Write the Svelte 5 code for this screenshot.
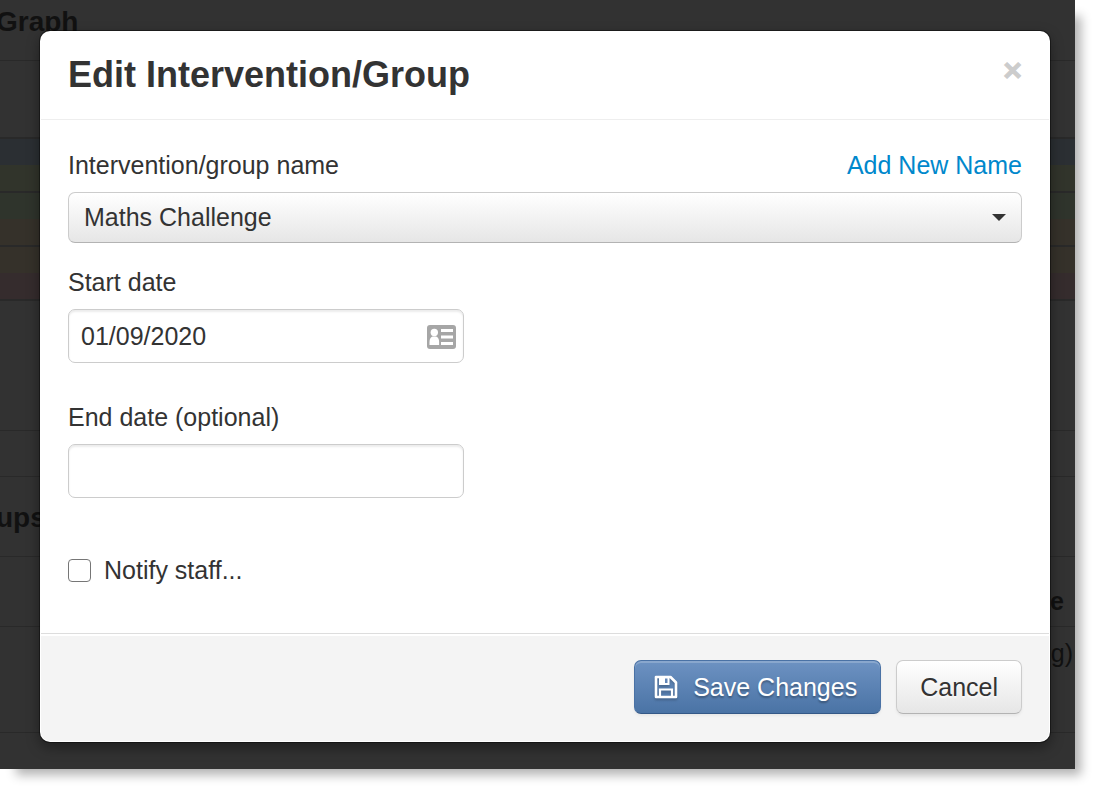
<script lang="ts">
  let groupName = $state('Maths Challenge');
  let startDate = $state('01/09/2020');
  let endDate = $state('');
  let notifyStaff = $state(false);
</script>

<div class="page">
  <div class="scene">
    <!-- dimmed page behind the dialog -->
    <div class="behind" aria-hidden="true">
      <div class="row heading graph">Graph</div>
      <div class="row toolbar"></div>
      <div class="bands">
        <div class="band blue"></div>
        <div class="band olive"></div>
      </div>
      <div class="bands">
        <div class="band green"></div>
        <div class="band brown"></div>
      </div>
      <div class="bands">
        <div class="band brown"></div>
        <div class="band red"></div>
      </div>
      <div class="row chart"></div>
      <div class="row strip"></div>
      <div class="row heading groups">ups</div>
      <div class="row column-head">e</div>
      <div class="row cell">g)</div>
    </div>

    <div class="modal" role="dialog" aria-labelledby="modal-title">
      <header class="modal-header">
        <h3 id="modal-title">Edit Intervention/Group</h3>
        <button class="close" type="button" aria-label="Close">×</button>
      </header>

      <form id="edit-group" class="modal-body">
        <div class="field">
          <div class="label-row">
            <label for="group-name">Intervention/group name</label>
            <a href="#new-name">Add New Name</a>
          </div>
          <div class="select-wrap">
            <select id="group-name" bind:value={groupName}>
              <option>Maths Challenge</option>
            </select>
            <svg class="caret" viewBox="0 0 14 7"><path d="M0 0h14L7 7z" fill="#333" /></svg>
          </div>
        </div>

        <div class="field start">
          <label for="start-date">Start date</label>
          <div class="input-wrap">
            <input id="start-date" type="text" bind:value={startDate} />
            <svg class="card-icon" viewBox="0 0 29 24">
              <rect width="29" height="24" rx="3" fill="#a6a6a6" />
              <circle cx="7.300" cy="7.500" r="3.700" fill="#fff" />
              <path d="M2.500 20v-3q0-4.500 3-5.500h3.600q3 1 3 5.500v3z" fill="#fff" />
              <path d="M14 4h12v3H14zM14 10.500h12v3H14zM14 17h12v3H14z" fill="#fff" />
            </svg>
          </div>
        </div>

        <div class="field end">
          <label for="end-date">End date (optional)</label>
          <div class="input-wrap">
            <input id="end-date" type="text" bind:value={endDate} />
          </div>
        </div>

        <label class="notify">
          <input type="checkbox" bind:checked={notifyStaff} />
          Notify staff...
        </label>
      </form>

      <footer class="modal-footer">
        <button class="btn primary" type="submit" form="edit-group">
          <svg class="save-icon" viewBox="0 0 24 24" fill="none" stroke="#fff" stroke-width="2">
            <path d="M2 2h14.500l5.500 5.500V22H2z" stroke-width="2.600" stroke-linejoin="round" />
            <path d="M5 2h10.500v8H5z" fill="#fff" stroke="none" />
            <path d="M11 3.500h2.500v4.500H11z" fill="#6286b8" stroke="none" />
            <path d="M6 21.500V14.500h12v7" stroke-width="2.200" />
          </svg>
          Save Changes
        </button>
        <button class="btn" type="button">Cancel</button>
      </footer>
    </div>
  </div>
</div>

<style>
  :global(body) {
    margin: 0;
    background: #fff;
  }

  .page {
    padding: 0 25px 25px 0;
    overflow: hidden;
    font-family: "Liberation Sans", Arial, sans-serif;
    font-size: 25px;
    line-height: 36px;
    color: #333;
  }

  .scene {
    display: grid;
    background: #323232;
    box-shadow: 11px 11px 10px -5px rgba(0, 0, 0, 0.3);
  }

  /* --- dimmed page --- */
  .behind {
    grid-area: 1 / 1;
    min-width: 0;
    overflow: hidden;
    color: #111;
  }
  .row {
    box-sizing: border-box;
    border-bottom: 1px solid #292929;
  }
  .heading {
    font-size: 28px;
    font-weight: bold;
    text-indent: -4px;
  }
  .graph {
    height: 61px;
    padding-top: 4px;
  }
  .toolbar {
    height: 78px;
    border-bottom-width: 2px;
  }
  .bands {
    border-bottom: 2px solid #292929;
  }
  .band {
    height: 26px;
  }
  .blue { background: #2b2f33; }
  .olive { background: #31342b; }
  .green { background: #2f342c; }
  .brown { background: #35312a; }
  .red { background: #352c2d; }
  .chart { height: 130px; }
  .strip { height: 46px; }
  .groups {
    height: 80px;
    padding-top: 23px;
  }
  .column-head {
    height: 70px;
    padding: 26px 11px 0 0;
    font-weight: bold;
    text-align: right;
  }
  .cell {
    height: 106px;
    padding: 8px 2px 0 0;
    text-align: right;
  }

  /* --- dialog --- */
  .modal {
    grid-area: 1 / 1;
    z-index: 1;
    margin: 31px 25px 27px 40px;
    padding: 1px;
    background: #fff;
    border-radius: 10px;
    box-shadow: 0 0 0 1px rgba(0, 0, 0, 0.4), 0 5px 14px rgba(0, 0, 0, 0.4);
  }
  .modal-header {
    display: flex;
    justify-content: space-between;
    align-items: flex-start;
    padding: 23px 27px 24px;
    border-bottom: 1px solid #eee;
  }
  h3 {
    margin: 0;
    font-size: 36px;
    line-height: 40px;
  }
  .close {
    padding: 0;
    border: 0;
    background: none;
    color: #ccc;
    font: bold 32px/30px "Liberation Sans", Arial, sans-serif;
    -webkit-text-stroke: 1px #ccc;
  }

  .modal-body {
    padding: 27px 27px 45px;
  }
  .label-row {
    display: flex;
    justify-content: space-between;
  }
  .field label {
    display: block;
  }
  a {
    color: #08c;
    text-decoration: none;
  }
  .select-wrap,
  .input-wrap {
    display: grid;
    align-items: center;
    margin-top: 9px;
  }
  .input-wrap {
    max-width: 396px;
  }
  select,
  input[type="text"] {
    grid-area: 1 / 1;
    box-sizing: border-box;
    width: 100%;
    margin: 0;
    border: 1px solid #ccc;
    border-radius: 7px;
    color: #333;
    font: inherit;
  }
  select {
    height: 51px;
    padding: 0 44px 2px 15px;
    appearance: none;
    border-bottom-color: #b3b3b3;
    background: linear-gradient(#fff, #e6e6e6);
  }
  input[type="text"] {
    height: 54px;
    padding: 0 44px 0 12px;
    background: #fff;
    box-shadow: inset 0 2px 2px rgba(0, 0, 0, 0.08);
  }
  .caret {
    grid-area: 1 / 1;
    justify-self: end;
    width: 14px;
    height: 7px;
    margin-right: 16px;
    pointer-events: none;
  }
  .card-icon {
    grid-area: 1 / 1;
    justify-self: end;
    width: 29px;
    height: 24px;
    margin: 2px 8px 0 0;
  }
  .start { margin-top: 21px; }
  .end { margin-top: 36px; }

  .notify {
    display: flex;
    align-items: center;
    gap: 13px;
    margin-top: 54px;
  }
  input[type="checkbox"] {
    box-sizing: border-box;
    width: 23px;
    height: 23px;
    margin: 0;
    appearance: none;
    border: 1px solid #767676;
    border-radius: 4px;
    background: #fff;
  }
  input[type="checkbox"]:checked {
    background: #08c;
  }

  .modal-footer {
    display: flex;
    justify-content: flex-end;
    gap: 15px;
    padding: 26px 27px 27px;
    border-top: 1px solid #ddd;
    border-radius: 0 0 9px 9px;
    background: #f4f4f4;
    box-shadow: inset 0 2px 0 #fff;
  }
  .btn {
    display: flex;
    align-items: center;
    gap: 15px;
    height: 54px;
    padding: 0 23px;
    border: 1px solid #ccc;
    border-bottom-color: #b3b3b3;
    border-radius: 7px;
    background: linear-gradient(#fff, #e6e6e6);
    box-shadow: inset 0 2px 0 rgba(255, 255, 255, 0.2), 0 2px 3px rgba(0, 0, 0, 0.05);
    color: #333;
    font: inherit;
    text-shadow: 0 2px 2px rgba(255, 255, 255, 0.75);
  }
  .primary {
    padding-left: 19px;
    border-color: #4a72a5;
    border-bottom-color: #345887;
    background: linear-gradient(#6d92c2, #4a73a5);
    color: #fff;
    text-shadow: 0 2px 2px rgba(0, 0, 0, 0.3);
  }
  .save-icon {
    width: 24px;
    height: 24px;
    filter: drop-shadow(0 2px 1px rgba(0, 0, 0, 0.2));
  }
</style>
